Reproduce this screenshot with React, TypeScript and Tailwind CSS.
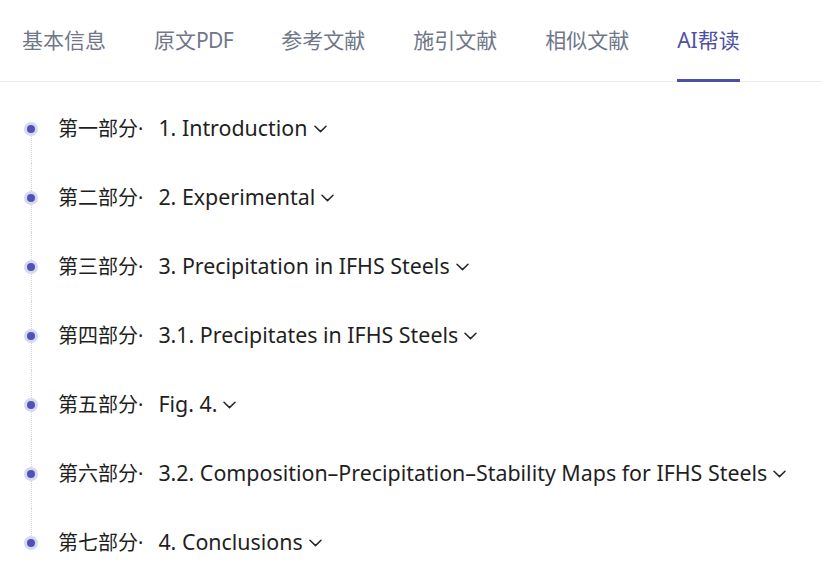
const tabs = ['基本信息', '原文PDF', '参考文献', '施引文献', '相似文献', 'AI帮读']

const sections = [
  { part: '第一部分', title: '1. Introduction' },
  { part: '第二部分', title: '2. Experimental' },
  { part: '第三部分', title: '3. Precipitation in IFHS Steels' },
  { part: '第四部分', title: '3.1. Precipitates in IFHS Steels' },
  { part: '第五部分', title: 'Fig. 4.' },
  { part: '第六部分', title: '3.2. Composition–Precipitation–Stability Maps for IFHS Steels' },
  { part: '第七部分', title: '4. Conclusions' },
]

const Chevron = () => (
  <svg width="13" height="8" viewBox="0 0 13 8" fill="none" className="ml-[6px] shrink-0">
    <path d="M1 1.2 6.5 6.6 12 1.2" stroke="#262626" strokeWidth="1.5" strokeLinecap="round" strokeLinejoin="round" />
  </svg>
)

export default function App() {
  return (
    <div className="w-[822px] h-[576px] overflow-hidden bg-white font-['Noto_Sans','Noto_Sans_CJK_SC',sans-serif]">
      <div className="h-[82px] border-b border-[#ededf0] flex px-[22px] gap-[48px]">
        {tabs.map((t, i) => {
          const active = i === tabs.length - 1
          return (
            <div
              key={t}
              className={
                active
                  ? 'relative flex items-center text-[21px] text-[#4e51a3]'
                  : 'relative flex items-center text-[21px] text-[#6f7789]'
              }
            >
              {t === '原文PDF' ? (
                <span>
                  原文<span className="tracking-[-0.6px]">PDF</span>
                </span>
              ) : (
                t
              )}
              {active && <span className="absolute left-0 right-0 bottom-[-1px] h-[3px] bg-[#4e51a3]" />}
            </div>
          )
        })}
      </div>

      <div className="pt-[12px] pl-[24px]">
        {sections.map((s, i) => (
          <div key={s.part} className="h-[69px] flex items-stretch">
            <div className="w-[14px] flex flex-col items-center shrink-0">
              <div className={i === 0 ? 'flex-1' : 'flex-1 border-l border-dotted border-[#d4d4dc]'} />
              <div className="w-[14px] h-[14px] rounded-full bg-[#d8d8f3] flex items-center justify-center">
                <div className="w-[8px] h-[8px] rounded-full bg-[#5053b5]" />
              </div>
              <div className={i === sections.length - 1 ? 'flex-1' : 'flex-1 border-l border-dotted border-[#d4d4dc]'} />
            </div>
            <div className="ml-[20px] flex items-center text-[#1f1f1f] whitespace-nowrap">
              <span className="text-[20px]">{s.part}·</span>
              <span className="ml-[15px] text-[21.4px]">{s.title}</span>
              <Chevron />
            </div>
          </div>
        ))}
      </div>
    </div>
  )
}
